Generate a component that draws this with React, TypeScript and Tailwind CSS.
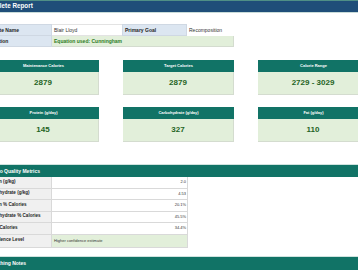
import React from "react";

const cards1 = [
  { t: "Maintenance Calories", v: "2879" },
  { t: "Target Calories", v: "2879" },
  { t: "Calorie Range", v: "2729 - 3029" },
];
const cards2 = [
  { t: "Protein (g/day)", v: "145" },
  { t: "Carbohydrate (g/day)", v: "327" },
  { t: "Fat (g/day)", v: "110" },
];
const rows = [
  { l: "Protein (g/kg)", v: "2.0" },
  { l: "Carbohydrate (g/kg)", v: "4.53" },
  { l: "Protein % Calories", v: "20.1%" },
  { l: "Carbohydrate % Calories", v: "45.5%" },
  { l: "Fat % Calories", v: "34.4%" },
];

function Card({ t, v }: { t: string; v: string }) {
  return (
    <div className="w-[111px] flex flex-col">
      <div className="h-[12px] bg-[#117366] flex items-center justify-center text-white font-bold text-[4px] leading-none">
        {t}
      </div>
      <div className="h-[23px] bg-[#e2efda] border-b border-r border-[#d4dccf] flex items-center justify-center text-[#1f6424] font-bold text-[8px] leading-none">
        {v}
      </div>
    </div>
  );
}

export default function App() {
  return (
    <div className="w-[358px] h-[270px] overflow-hidden bg-white [font-family:'Liberation_Sans',Arial,sans-serif]">
      <div className="-ml-[16px] w-[400px] flex flex-col">
        <div className="h-[13px] bg-[#1f4e79] border-t border-t-[#4f8f86] border-b border-b-[#c9dcd9] flex items-center">
          <span className="-ml-[2px] text-white font-bold text-[6.3px] leading-none">Complete Report</span>
        </div>
        <div className="h-[11px]" />
        <div className="h-[12px] flex text-[5px] leading-none">
          <div className="w-[68px] bg-[#dce6f1] border border-[#cfd8e3] flex items-center pl-[2px] font-bold text-[#1f1f1f]">Athlete Name</div>
          <div className="w-[70px] border-t border-b border-[#e3e3e3] flex items-center pl-[2px] text-[#333]">Blair Lloyd</div>
          <div className="w-[65px] bg-[#dce6f1] border border-[#cfd8e3] flex items-center pl-[2px] font-bold text-[#1f1f1f]">Primary Goal</div>
          <div className="w-[60px] flex items-center pl-[2px] text-[#333]">Recomposition</div>
        </div>
        <div className="h-[11px] flex text-[5px] leading-none">
          <div className="w-[68px] bg-[#dce6f1] border border-t-0 border-[#cfd8e3] flex items-center pl-[2px] font-bold text-[#1f1f1f]">Equation</div>
          <div className="w-[182px] bg-[#e2efda] border-b border-r border-[#d4dccf] flex items-center pl-[2px] font-bold text-[#2e7d1f]">Equation used: Cunningham</div>
        </div>
        <div className="h-[13px]" />
        <div className="flex gap-[24px] pl-[4px]">
          {cards1.map((c) => (
            <Card key={c.t} {...c} />
          ))}
        </div>
        <div className="h-[12px]" />
        <div className="flex gap-[24px] pl-[4px]">
          {cards2.map((c) => (
            <Card key={c.t} {...c} />
          ))}
        </div>
        <div className="h-[22px]" />
        <div className="h-[13px] bg-[#117366] border-t border-t-[#cfe3df] flex items-center pl-[4px]">
          <span className="text-white font-bold text-[5px] leading-none">Macro Quality Metrics</span>
        </div>
        <div className="flex flex-col w-[204px]">
          {rows.map((r) => (
            <div key={r.l} className="h-[11.5px] flex border-b border-[#d9d9d9] leading-none">
              <div className="w-[68px] bg-[#f0f0f0] border-r border-[#d9d9d9] flex items-center pl-[2px] font-bold text-[4.6px] text-[#1f1f1f]">{r.l}</div>
              <div className="flex-1 border-r border-[#d9d9d9] flex items-center justify-end pr-[1px] text-[4px] text-[#333]">{r.v}</div>
            </div>
          ))}
          <div className="h-[13px] flex border-b border-[#d9d9d9] leading-none">
            <div className="w-[68px] bg-[#f0f0f0] border-r border-[#d9d9d9] flex items-center pl-[2px] font-bold text-[4.6px] text-[#1f1f1f]">Confidence Level</div>
            <div className="flex-1 bg-[#e2efda] border-r border-[#d9d9d9] flex items-center pl-[2px] text-[4px] text-[#333]">Higher confidence estimate</div>
          </div>
        </div>
        <div className="h-[8px]" />
        <div className="h-[15px] bg-[#117366] border-t border-t-[#cfe3df] flex items-center pl-[4px]">
          <span className="text-white font-bold text-[5px] leading-none">Coaching Notes</span>
        </div>
      </div>
    </div>
  );
}
